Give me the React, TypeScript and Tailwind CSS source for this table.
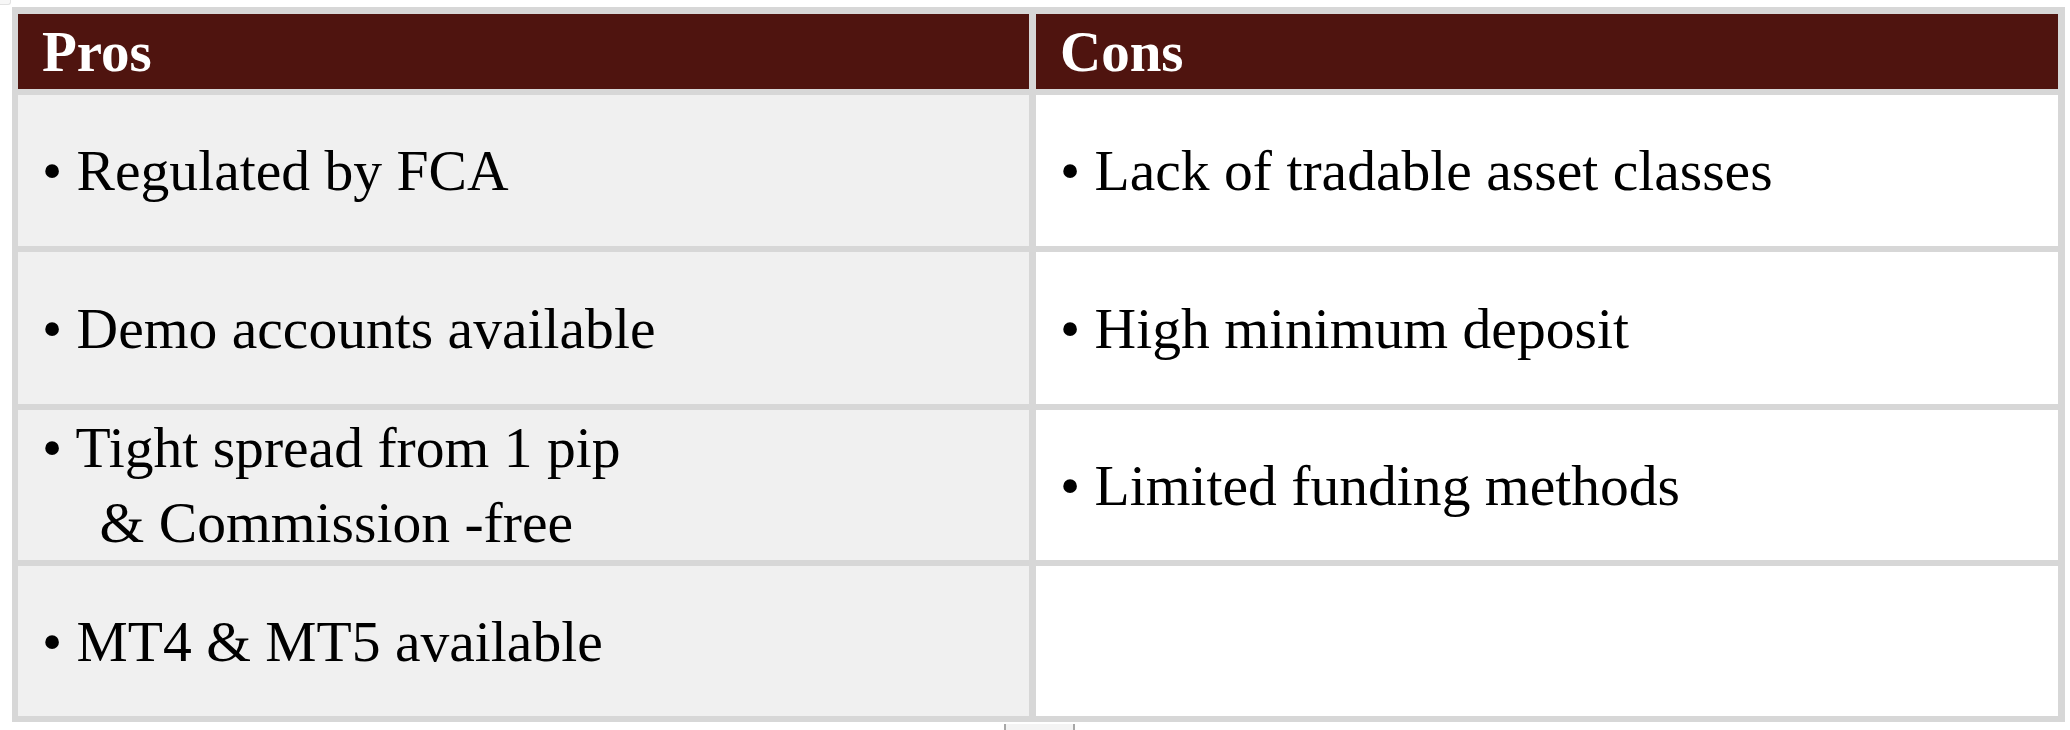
import { Fragment } from "react";

const pros = [
  ["• Regulated by FCA"],
  ["• Demo accounts available"],
  ["• Tight spread from 1 pip", "\u00a0\u00a0\u00a0\u00a0& Commission -free"],
  ["• MT4 & MT5 available"],
];

const cons = [
  ["• Lack of tradable asset classes"],
  ["• High minimum deposit"],
  ["• Limited funding methods"],
  [],
];

function Cell({ lines, shaded }: { lines: string[]; shaded?: boolean }) {
  return (
    <div
      className={
        "flex flex-col justify-center pl-[24px] text-[57.6px] leading-[75px] text-black " +
        (shaded ? "bg-[#f0f0f0]" : "bg-white")
      }
    >
      {lines.map((line, i) => (
        <span key={i} className="whitespace-pre">
          {line}
        </span>
      ))}
    </div>
  );
}

export default function App() {
  return (
    <div
      className="h-[730px] w-[2070px] overflow-hidden bg-white"
      style={{ fontFamily: '"Liberation Serif", "Times New Roman", serif' }}
    >
      <div className="h-[5px] w-[11px] rounded-br-[3px] border-b border-r border-[#e2e2e2] bg-[#f7f7f7]" />
      <div className="ml-[12px] mt-[2px] grid w-[2053px] grid-cols-[1011px_1022px] grid-rows-[75px_151px_152px_150px_150px] gap-x-[7px] gap-y-[6px] bg-[#d7d7d7] pb-[6px] pl-[6px] pr-[7px] pt-[7px]">
        <div className="flex items-center bg-[#4f140f] pl-[24px] text-[57px] font-bold text-white">
          Pros
        </div>
        <div className="flex items-center bg-[#4f140f] pl-[24px] text-[57px] font-bold text-white">
          Cons
        </div>
        {pros.map((p, i) => (
          <Fragment key={i}>
            <Cell lines={p} shaded />
            <Cell lines={cons[i]} />
          </Fragment>
        ))}
      </div>
      <div className="ml-[1004px] mt-[2px] h-[6px] w-[71px] border-x-2 border-[#a8a8a8] bg-[#f4f4f4]" />
    </div>
  );
}
